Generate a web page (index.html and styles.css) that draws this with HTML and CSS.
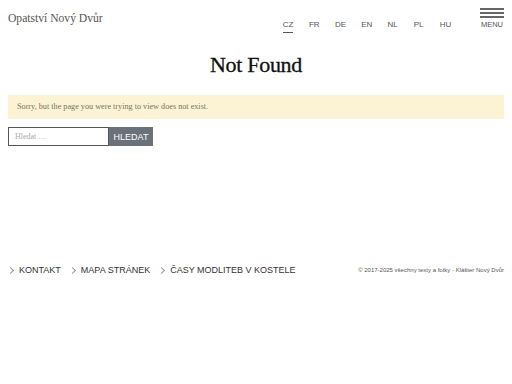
FILE: index.html
```html
<!DOCTYPE html>
<html>
<head>
    <title>Not Found - Opatství Nový Dvůr</title>
    <link rel="stylesheet" href="styles.css">
</head>
<body>
    <header class="top">
        <a class="logo" href="#">Opatství Nový Dvůr</a>
        <nav class="langs">
            <a class="lang active" href="#">CZ</a>
            <a class="lang" href="#">FR</a>
            <a class="lang" href="#">DE</a>
            <a class="lang" href="#">EN</a>
            <a class="lang" href="#">NL</a>
            <a class="lang" href="#">PL</a>
            <a class="lang" href="#">HU</a>
        </nav>
        <button class="menu" type="button">
            <span class="bar"></span>
            <span class="bar"></span>
            <span class="bar"></span>
            <span class="menu-label">MENU</span>
        </button>
    </header>

    <main class="content">
        <h1 class="title">Not Found</h1>
        <div class="alert">Sorry, but the page you were trying to view does not exist.</div>
        <form class="search">
            <input class="search-field" type="text" placeholder="Hledat …">
            <button class="search-btn" type="submit">HLEDAT</button>
        </form>
    </main>

    <footer class="foot">
        <ul class="foot-links">
            <li><a href="#">KONTAKT</a></li>
            <li><a href="#">MAPA STRÁNEK</a></li>
            <li><a href="#">ČASY MODLITEB V KOSTELE</a></li>
        </ul>
        <p class="copy">© 2017-2025 všechny texty a fotky - Klášter Nový Dvůr</p>
    </footer>
</body>
</html>
```

FILE: styles.css
```css
body {
    font-family: "Liberation Serif", serif;
    background-color: #fff;
    color: #333;
    margin: 0;
    padding: 0;
}

a {
    color: inherit;
    text-decoration: none;
}

.top {
    display: flex;
    align-items: flex-start;
    padding: 8px 8px 0 8px;
    height: 28px;
}

.logo {
    font-size: 11.6px;
    color: #555;
    margin-top: 4px;
    flex: 1;
}

.langs {
    display: flex;
    margin-top: 12px;
    margin-right: 14px;
}

.lang {
    position: relative;
    font-family: "Liberation Sans", sans-serif;
    font-size: 8px;
    color: #555;
    width: 26.2px;
}

.lang.active::after {
    content: "";
    position: absolute;
    left: 0;
    top: 12px;
    width: 10px;
    height: 1px;
    background-color: #555;
}

.menu {
    display: flex;
    flex-direction: column;
    align-items: flex-end;
    gap: 2px;
    background: none;
    border: none;
    padding: 0;
    width: 24px;
    cursor: pointer;
}

.bar {
    display: block;
    width: 24px;
    height: 2px;
    background-color: #666;
}

.menu-label {
    font-family: "Liberation Sans", sans-serif;
    font-size: 7.5px;
    line-height: 9px;
    color: #555;
    margin-top: 0;
    align-self: center;
}

.content {
    padding: 0 8px;
}

.title {
    text-align: center;
    font-size: 22px;
    font-weight: normal;
    color: #111;
    margin: 16px 0 17px 0;
    letter-spacing: -0.3px;
    -webkit-text-stroke: 0.3px #111;
}

.alert {
    background-color: #fcf2d4;
    color: #7a7466;
    font-size: 8.2px;
    height: 24px;
    line-height: 24px;
    padding: 0 9px;
}

.search {
    display: flex;
    margin-top: 8px;
}

.search-field {
    width: 101px;
    height: 19px;
    box-sizing: border-box;
    border: 1px solid #555;
    font-family: "Liberation Serif", serif;
    font-size: 8px;
    padding: 0 6px;
    margin: 0;
}

.search-field::placeholder {
    color: #aaa;
}

.search-btn {
    height: 19px;
    width: 44px;
    border: none;
    background-color: #6b717a;
    color: #fff;
    font-family: "Liberation Sans", sans-serif;
    font-size: 9px;
    padding: 0;
    margin: 0;
}

.foot {
    display: flex;
    justify-content: space-between;
    align-items: center;
    padding: 0 8px;
    margin-top: 119px;
}

.foot-links {
    display: flex;
    list-style: none;
    padding: 0;
    margin: 0;
    gap: 9px;
}

.foot-links li {
    font-family: "Liberation Sans", sans-serif;
    font-size: 9px;
    color: #333;
    display: flex;
    align-items: center;
}

.foot-links li::before {
    content: "";
    width: 4px;
    height: 4px;
    border-right: 1px solid #999;
    border-top: 1px solid #999;
    transform: rotate(45deg);
    margin-right: 6px;
}

.copy {
    font-family: "Liberation Sans", sans-serif;
    font-size: 6px;
    color: #555;
    margin: 0;
}
```
